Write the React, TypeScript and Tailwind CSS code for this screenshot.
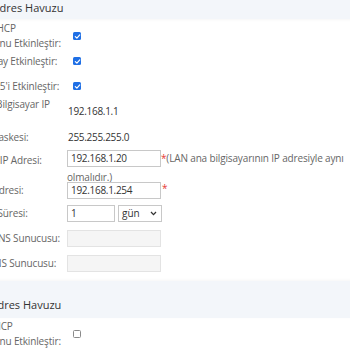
import React from "react";

const font = { fontFamily: '"Open Sans", "Noto Sans", sans-serif' };

function Check({ on }: { on: boolean }) {
  if (on)
    return (
      <span className="inline-flex w-[8px] h-[8px] rounded-[1.5px] bg-[#1f6fe5] items-center justify-center">
        <svg width="7" height="7" viewBox="0 0 8 8">
          <path d="M1.5 4.2 L3.3 5.9 L6.6 2.2" stroke="#fff" strokeWidth="1.4" fill="none" strokeLinecap="round" strokeLinejoin="round" />
        </svg>
      </span>
    );
  return <span className="inline-block w-[8px] h-[8px] rounded-[1.5px] border border-[#8a8a8a] bg-white" />;
}

function Label({ children, className = "" }: { children: React.ReactNode; className?: string }) {
  return (
    <div className={"w-[112px] shrink-0 text-[10px] leading-[15px] tracking-[-0.15px] text-[#666] whitespace-nowrap " + className}>{children}</div>
  );
}

function Input({ value, w = "w-[94px]", disabled = false }: { value?: string; w?: string; disabled?: boolean }) {
  return (
    <div
      className={
        w +
        " h-[17px] border flex items-center px-[3px] text-[10px] tracking-[-0.3px] text-[#333] " +
        (disabled ? "bg-[#f5f5f5] border-[#e3e3e3]" : "bg-white border-[#c8c8c8]")
      }
    >
      {value}
    </div>
  );
}

export default function App() {
  return (
    <div className="w-[350px] h-[350px] overflow-hidden bg-white" style={font}>
      <div className="ml-[-45px] mt-[-18px] w-[420px]">
        {/* header 1 */}
        <div className="h-[37px] bg-[#f3f6fa] shadow-[0_1px_3px_rgba(0,0,0,0.04)] pt-[19px] text-[11px] leading-[13px] text-[#333] whitespace-nowrap">
          Birincil Adres Havuzu
        </div>

        <div className="flex items-center h-[33px]">
          <Label className="pt-[1px]">
            LAN'da DHCP
            <br />
            Sunucusunu Etkinleştir:
          </Label>
          <div className="pl-[6px] flex items-center pt-[1px]"><Check on /></div>
        </div>

        <div className="flex items-center h-[18px]">
          <Label>DHCP Relay Etkinleştir:</Label>
          <div className="pl-[6px] flex items-center"><Check on /></div>
        </div>

        <div className="flex items-center h-[18px] mt-[7px]">
          <Label>Option 125'i Etkinleştir:</Label>
          <div className="pl-[6px] flex items-center"><Check on /></div>
        </div>

        <div className="flex items-center h-[30px] mt-[1px]">
          <Label className="pt-[1px]">
            LAN Ana Bilgisayar IP
            <br />
            Adresi:
          </Label>
          <div className="pl-[1px] pt-[1px] text-[10px] tracking-[-0.3px] text-[#333]">192.168.1.1</div>
        </div>

        <div className="flex items-center h-[18px] mt-[2px]">
          <Label>Subnet Maskesi:</Label>
          <div className="pl-[1px] text-[10px] tracking-[-0.3px] text-[#333]">255.255.255.0</div>
        </div>

        <div className="flex items-start mt-[4px]">
          <Label className="pt-[3px]">Başlangıç IP Adresi:</Label>
          <div>
            <div className="flex items-center whitespace-nowrap">
              <Input value="192.168.1.20" />
              <span className="text-[10px] text-[#666] leading-[15px] tracking-[-0.15px]">
                <span className="text-[#e53935]">*</span>(LAN ana bilgisayarının IP adresiyle aynı
              </span>
            </div>
            <div className="text-[10px] text-[#666] leading-[15px] mt-[3px] tracking-[-0.15px]">olmalıdır.)</div>
          </div>
        </div>

        <div className="flex items-center mt-[-3px] h-[17px]">
          <Label className="pl-[5px]">Bitiş IP Adresi:</Label>
          <Input value="192.168.1.254" />
          <span className="text-[10px] text-[#e53935] self-start leading-[12px] pl-[1px]">*</span>
        </div>

        <div className="flex items-center mt-[6px] h-[17px]">
          <Label>Kiralama Süresi:</Label>
          <Input value="1" w="w-[48px]" />
          <div className="ml-[3px] w-[44px] h-[17px] border border-[#c8c8c8] bg-white flex items-center justify-between pl-[3px] pr-[4px] text-[10px] text-[#333]">
            <span>gün</span>
            <svg width="7" height="5" viewBox="0 0 7 5">
              <path d="M1 1 L3.5 3.6 L6 1" stroke="#333" strokeWidth="1.3" fill="none" />
            </svg>
          </div>
        </div>

        <div className="flex items-center mt-[8px] h-[17px]">
          <Label className="pl-[3px]">Birincil DNS Sunucusu:</Label>
          <Input disabled />
        </div>

        <div className="flex items-center mt-[8px] h-[17px]">
          <Label className="pl-[4px]">İkincil DNS Sunucusu:</Label>
          <Input disabled />
        </div>

        {/* header 2 */}
        <div className="mt-[9px] h-[37px] bg-[#f3f6fa] shadow-[0_-1px_3px_rgba(0,0,0,0.04)] pt-[17px] text-[11px] leading-[13px] text-[#333] whitespace-nowrap">
          Konuk Adres Havuzu
        </div>

        <div className="flex items-center h-[32px]">
          <Label>
            Konuk DHCP
            <br />
            Sunucusunu Etkinleştir:
          </Label>
          <div className="pl-[6px] flex items-center"><Check on={false} /></div>
        </div>
      </div>
    </div>
  );
}
